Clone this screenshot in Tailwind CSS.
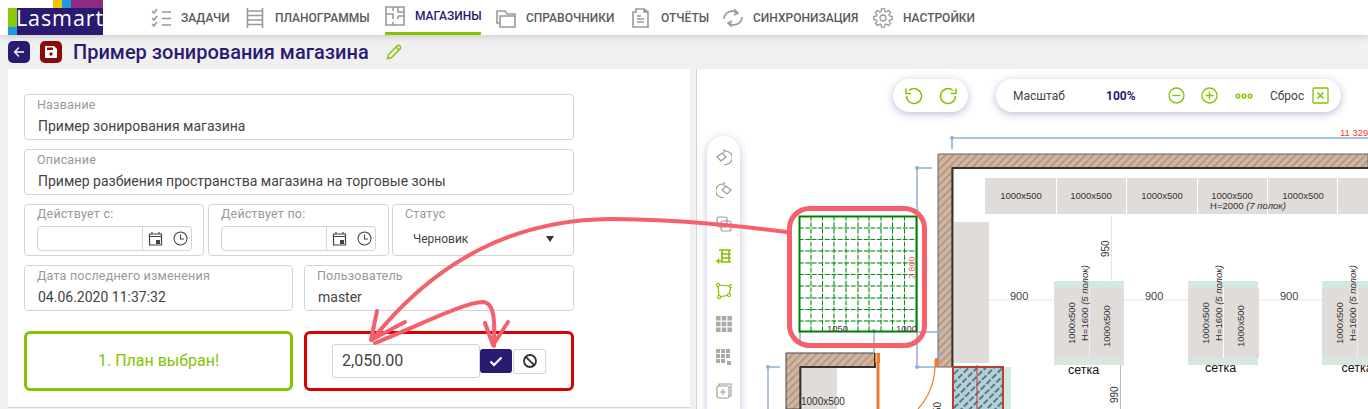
<!DOCTYPE html>
<html lang="en">
  <head>
    <meta charset="UTF-8" />
    <meta name="viewport" content="width=device-width, initial-scale=1.0" />
    <script src="https://cdn.jsdelivr.net/npm/@tailwindcss/browser@4"></script>
    <title>Пример зонирования магазина</title>
  </head>
  <body class="relative w-[1368px] h-[409px] overflow-hidden bg-[#f0f0f0] font-['Roboto',sans-serif]">
    <!-- top nav -->
    <header class="relative z-10 flex h-[35px] bg-white shadow-[0_2px_6px_rgba(0,0,0,0.15)] pl-2">
      <div class="relative w-[95px] h-[35px] shrink-0">
        <div class="absolute left-[45px] top-0 w-[9px] h-2 bg-[#f5c400]"></div>
        <div class="absolute left-[54px] top-0 w-[9px] h-2 bg-[#1e9be0]"></div>
        <div class="absolute left-[63px] top-0 w-[32px] h-2 bg-[#8e2a80]"></div>
        <div class="absolute left-0 top-2 w-[9px] h-[19px] bg-[#8cc800]"></div>
        <div class="absolute left-0 top-[27px] w-[9px] h-2 bg-[#1e9be0]"></div>
        <div class="absolute left-[9px] top-2 w-[86px] h-[27px] bg-[#2a1a72]"></div>
        <div class="absolute left-[8px] top-[4px] text-white text-[21.500px] leading-[27px] font-['Open_Sans',sans-serif] tracking-[0.9px]">Lasmart</div>
      </div>
      <nav class="flex items-stretch ml-[48px] text-[12px] font-medium text-[#5a5a5a]">
        <a class="flex items-center w-[94px]">
          <svg class="w-5 h-5 mr-[10px] shrink-0" viewBox="0 0 20 20" fill="none" stroke="#999" stroke-width="1.600"><path d="M1 3l2 2 3-4M1 10l2 2 3-4M1 16l2 2 3-4"/><path d="M11 4h9M11 10.500h9M11 17h9"/></svg>ЗАДАЧИ
        </a>
        <a class="flex items-center w-[140px]">
          <svg class="w-5 h-5 mr-[10px] shrink-0" viewBox="0 0 20 20" fill="none" stroke="#999" stroke-width="1.600"><path d="M2.500 0v20M17.500 0v20M2.500 3h15M2.500 7.500h15M2.500 12h15M2.500 16.500h15"/></svg>ПЛАНОГРАММЫ
        </a>
        <a class="flex items-center w-[96px] text-[#2a1a72] border-b-[3px] border-[#84c400]">
          <svg class="w-5 h-5 mr-[10px] shrink-0" viewBox="0 0 20 20" fill="none" stroke="#999" stroke-width="1.600"><path d="M1 1h18v18H1zM8 1v4M1 8h7v5M8 19v-3M13 1v5h6M13 10h6M13 10v3"/></svg>МАГАЗИНЫ
        </a>
        <a class="flex items-center w-[135px] ml-[15px]">
          <svg class="w-5 h-5 mr-[10px] shrink-0" viewBox="0 0 20 20" fill="none" stroke="#999" stroke-width="1.600"><path d="M4 15H1V3h8l2 3h8v2M4 8h15v11H4z"/></svg>СПРАВОЧНИКИ
        </a>
        <a class="flex items-center w-[92px]">
          <svg class="w-5 h-5 mr-[10px] shrink-0" viewBox="0 0 20 20" fill="none" stroke="#999" stroke-width="1.600"><path d="M5 1h8v3h4v15H2V4h3zM13 1l4 3M6 11h7M6 14h7M6 8h4"/></svg>ОТЧЁТЫ
        </a>
        <a class="flex items-center w-[150px]">
          <svg class="w-5 h-5 mr-[10px] shrink-0" viewBox="0 0 20 20" fill="none" stroke="#999" stroke-width="1.600"><path d="M1 11a8 8 0 0 1 13-6M19 9a8 8 0 0 1-13 6"/><path d="M11 1l4 4-4 2M9 19l-4-4 4-2"/></svg>СИНХРОНИЗАЦИЯ
        </a>
        <a class="flex items-center">
          <svg class="w-5 h-5 mr-[10px] shrink-0" viewBox="0 0 20 20" fill="none" stroke="#999" stroke-width="1.300">
            <circle cx="10" cy="10" r="3" />
            <path d="M8 3.600L8.500.8h3l.5 2.800A6.800 6.800 0 0 1 13.100 4.060" />
            <path transform="rotate(45 10 10)" d="M8 3.600L8.500.8h3l.5 2.800A6.800 6.800 0 0 1 13.100 4.060" />
            <path transform="rotate(90 10 10)" d="M8 3.600L8.500.8h3l.5 2.800A6.800 6.800 0 0 1 13.100 4.060" />
            <path transform="rotate(135 10 10)" d="M8 3.600L8.500.8h3l.5 2.800A6.800 6.800 0 0 1 13.100 4.060" />
            <path transform="rotate(180 10 10)" d="M8 3.600L8.500.8h3l.5 2.800A6.800 6.800 0 0 1 13.100 4.060" />
            <path transform="rotate(225 10 10)" d="M8 3.600L8.500.8h3l.5 2.800A6.800 6.800 0 0 1 13.100 4.060" />
            <path transform="rotate(270 10 10)" d="M8 3.600L8.500.8h3l.5 2.800A6.800 6.800 0 0 1 13.100 4.060" />
            <path transform="rotate(315 10 10)" d="M8 3.600L8.500.8h3l.5 2.800A6.800 6.800 0 0 1 13.100 4.060" />
          </svg>НАСТРОЙКИ
        </a>
      </nav>
    </header>

    <div class="flex h-[374px]">
      <!-- left column -->
      <div class="w-[690px] shrink-0 pl-2">
        <div class="flex items-center h-[34px]">
          <button class="flex items-center justify-center w-[22px] h-[22px] rounded-[5px] bg-[#2a1a72]">
            <svg class="w-3 h-3" viewBox="0 0 12 12" fill="none" stroke="#fff" stroke-width="1.300"><path d="M11 6H1.500M6 1.500 1.500 6 6 10.500"/></svg>
          </button>
          <button class="flex items-center justify-center w-[22px] h-[22px] ml-[10px] rounded-[5px] bg-[#8b0a0a]">
            <svg class="w-3 h-3" viewBox="0 0 12 12"><path fill="#fff" d="M1 0h8l3 3v8a1 1 0 0 1-1 1H1a1 1 0 0 1-1-1V1a1 1 0 0 1 1-1z"/><path fill="#8b0a0a" d="M2 1.500h6v2.500H2z"/><circle cx="6" cy="8" r="1.700" fill="#8b0a0a"/></svg>
          </button>
          <h1 class="ml-[11px] text-[20px] font-medium text-[#2a1a72] whitespace-nowrap">Пример зонирования магазина</h1>
          <svg class="w-4 h-4 ml-[17px]" viewBox="0 0 16 16" fill="none" stroke="#84c400" stroke-width="1.400"><path d="M1.500 14.500l1-4L11 2a1.500 1.500 0 0 1 3 3l-8.500 8.500z"/><path d="M10 3l3 3"/></svg>
        </div>
        <main class="h-[339px] bg-white border-b border-[#d4d4d4] pl-4 pt-[25px]">
          <div class="flex flex-col gap-[9px] w-[550px] text-[#444]">
            <div class="h-[46px] border border-[#d4d4d4] rounded-[4px] pl-[12px]">
              <div class="text-[12.500px] leading-[14px] mt-[3px] text-[#999] tracking-[0.2px]">Название</div>
              <div class="text-[14px] leading-[16px] mt-[6px] ml-px">Пример зонирования магазина</div>
            </div>
            <div class="h-[46px] border border-[#d4d4d4] rounded-[4px] pl-[12px]">
              <div class="text-[12.500px] leading-[14px] mt-[3px] text-[#999] tracking-[0.2px]">Описание</div>
              <div class="text-[14px] leading-[16px] mt-[6px] ml-px">Пример разбиения пространства магазина на торговые зоны</div>
            </div>
            <div class="flex h-[52px]">
              <div class="w-[180px] border border-[#d4d4d4] rounded-[4px] pl-[12px]">
                <div class="text-[12.500px] leading-[14px] mt-[2px] text-[#999] tracking-[0.2px]">Действует с:</div>
                <div class="flex h-[25px] w-[155px] mt-[5px] border border-[#d4d4d4] rounded-[4px]">
                  <div class="w-[105px] border-r border-[#d4d4d4]"></div>
                  <div class="flex items-center gap-[10px] pl-[5px]">
                    <svg class="w-[15px] h-[15px]" viewBox="0 0 15 15" fill="none" stroke="#444" stroke-width="1.200"><path d="M1.500 3h12v11h-12zM1.500 5.500h12M4 1v2.500M11 1v2.500"/><rect x="8" y="9" width="4" height="4" fill="#444" stroke="none"/></svg>
                    <svg class="w-[15px] h-[15px]" viewBox="0 0 15 15" fill="none" stroke="#444" stroke-width="1.100"><circle cx="7.500" cy="7.500" r="6.500"/><path d="M7.500 3.500v4.500h3.500"/></svg>
                  </div>
                </div>
              </div>
              <div class="w-[181px] ml-1 border border-[#d4d4d4] rounded-[4px] pl-[12px]">
                <div class="text-[12.500px] leading-[14px] mt-[2px] text-[#999] tracking-[0.2px]">Действует по:</div>
                <div class="flex h-[25px] w-[155px] mt-[5px] border border-[#d4d4d4] rounded-[4px]">
                  <div class="w-[105px] border-r border-[#d4d4d4]"></div>
                  <div class="flex items-center gap-[10px] pl-[5px]">
                    <svg class="w-[15px] h-[15px]" viewBox="0 0 15 15" fill="none" stroke="#444" stroke-width="1.200"><path d="M1.500 3h12v11h-12zM1.500 5.500h12M4 1v2.500M11 1v2.500"/><rect x="8" y="9" width="4" height="4" fill="#444" stroke="none"/></svg>
                    <svg class="w-[15px] h-[15px]" viewBox="0 0 15 15" fill="none" stroke="#444" stroke-width="1.100"><circle cx="7.500" cy="7.500" r="6.500"/><path d="M7.500 3.500v4.500h3.500"/></svg>
                  </div>
                </div>
              </div>
              <div class="w-[182px] ml-[3px] border border-[#d4d4d4] rounded-[4px] pl-[12px]">
                <div class="text-[12.500px] leading-[14px] mt-[2px] text-[#999] tracking-[0.2px]">Статус</div>
                <div class="flex items-center justify-between h-[25px] mt-[5px] pl-[8px] pr-[19px] text-[12px]">
                  Черновик
                  <span class="w-0 h-0 border-x-[4px] border-x-transparent border-t-[6px] border-t-[#333]"></span>
                </div>
              </div>
            </div>
            <div class="flex h-[46px] gap-[11px]">
              <div class="w-[269px] border border-[#d4d4d4] rounded-[4px] pl-[12px]">
                <div class="text-[12.500px] leading-[14px] mt-[3px] text-[#999] tracking-[0.2px]">Дата последнего изменения</div>
                <div class="text-[14px] leading-[16px] mt-[6px] ml-px">04.06.2020 11:37:32</div>
              </div>
              <div class="w-[270px] border border-[#d4d4d4] rounded-[4px] pl-[12px]">
                <div class="text-[12.500px] leading-[14px] mt-[3px] text-[#999] tracking-[0.2px]">Пользователь</div>
                <div class="text-[14px] leading-[16px] mt-[6px] ml-px">master</div>
              </div>
            </div>
            <div class="flex h-[60px] gap-[11px] mt-[11px]">
              <div class="flex items-center justify-center w-[269px] border-[3px] border-[#84c400] rounded-[6px] text-[16px] text-[#84c400]">1. План выбран!</div>
              <div class="flex items-center w-[270px] border-[3px] border-[#d80000] rounded-[6px] pl-[25px]">
                <div class="flex items-center w-[148px] h-[34px] border border-[#d4d4d4] rounded-[3px] pl-[9px] text-[16px] text-[#444]">2,050.00</div>
                <button class="flex items-center justify-center w-8 h-6 rounded-[3px] bg-[#2a1a72]">
                  <svg class="w-[14px] h-[14px]" viewBox="0 0 14 14" fill="none" stroke="#fff" stroke-width="2.200"><path d="M1.500 7.500l3.500 3.500 7.500-7.500"/></svg>
                </button>
                <button class="flex items-center justify-center w-[33px] h-[25px] ml-px rounded-[3px] border border-[#d4d4d4]">
                  <svg class="w-[14px] h-[14px]" viewBox="0 0 14 14" fill="none" stroke="#333" stroke-width="1.800"><circle cx="7" cy="7" r="6"/><path d="M2.800 2.800l8.400 8.400"/></svg>
                </button>
              </div>
            </div>
          </div>
        </main>
      </div>

      <!-- plan canvas -->
      <section class="relative mt-[34px] ml-[6px] flex-1 bg-white border-l border-[#d4d4d4]">
        <svg class="absolute left-0 top-0 font-['Liberation_Sans',sans-serif]" width="671" height="340" viewBox="697 69 671 340" fill="none">
          <defs>
            <pattern id="brick" width="5.500" height="5.500" patternUnits="userSpaceOnUse" patternTransform="rotate(45)">
              <rect width="5.500" height="5.500" fill="#d0b5a0" />
              <path d="M2.750 0v5.500" stroke="#a08068" stroke-width="1" />
            </pattern>
            <pattern id="glass" width="6" height="8" patternUnits="userSpaceOnUse" patternTransform="rotate(45)">
              <rect width="6" height="8" fill="#b5d0d6" />
              <path d="M3 0v6" stroke="#3a5a68" stroke-width="1.500" />
            </pattern>
          </defs>
          <!-- walls -->
          <path d="M938 154H1368V168H952V367H938z" fill="url(#brick)" stroke="#666" stroke-width="1" />
          <path d="M1368 168H952.500V367" stroke="#333" stroke-width="2" />
          <path d="M786 409V353H875V367H800V409z" fill="url(#brick)" stroke="#444" stroke-width="1" />
          <path d="M875 353V367H800.500V409" stroke="#333" stroke-width="2" />
          <rect x="802" y="368" width="35" height="41" fill="#e0dcd9" />
          <text x="801" y="405" font-size="10" fill="#333">1000x500</text>
          <!-- dimension lines -->
          <g stroke="#8fb0d8" stroke-width="1.500">
            <path d="M952 138H1368M952 136V149M932 168H917V367H939M917 332H939M800 332V345M874 331V352M768 367V409M768 367H780M939 350V367" />
            <g fill="#8fb0d8" stroke="none">
              <circle cx="952" cy="138" r="2" />
              <circle cx="917" cy="168" r="2" />
              <circle cx="917" cy="367" r="2" />
              <circle cx="939" cy="332" r="2" />
              <circle cx="874" cy="331" r="2" />
              <circle cx="768" cy="367" r="2" />
            </g>
          </g>
          <text x="1340" y="136" font-size="9.500" fill="#f04030">11 329</text>
          <!-- orange door -->
          <path d="M878 353V409" stroke="#f07a30" stroke-width="3" />
          <rect x="875.500" y="353.500" width="4" height="9" stroke="#f07a30" />
          <path d="M935 360C936 382 928 398 918 409" stroke="#f07a30" stroke-width="1.200" />
          <rect x="935" y="358" width="4" height="9" fill="#f07a30" />
          <text transform="rotate(-90 941 413)" x="941" y="413" font-size="10" fill="#333">50</text>
          <!-- top shelves -->
          <rect x="985" y="178" width="383" height="36" fill="#e0dcd9" />
          <path d="M1056.500 178v36M1126.500 178v36M1197.500 178v36M1267.500 178v36M1337.500 178v36" stroke="#fff" />
          <g font-size="9.500" fill="#333" text-anchor="middle">
            <text x="1021" y="199">1000x500</text>
            <text x="1091" y="199">1000x500</text>
            <text x="1162" y="199">1000x500</text>
            <text x="1232" y="199">1000x500</text>
            <text x="1303" y="199">1000x500</text>
            <text x="1248" y="209">H=2000 <tspan font-style="italic">(7 полок)</tspan></text>
          </g>
          <path d="M1111.500 216V281M1124 300H1188M1258 300H1322M989 300H1052" stroke="#e4e4e4" />
          <path d="M1120.500 365V409" stroke="#bbb" />
          <text transform="rotate(-90 1109 257)" x="1109" y="257" font-size="10" fill="#333">950</text>
          <text transform="rotate(-90 1118 403)" x="1118" y="403" font-size="10" fill="#333">990</text>
          <!-- left gondola -->
          <rect x="954" y="222" width="35" height="141" fill="#e0dcd9" />
          <g font-size="11" fill="#444">
            <text x="1010" y="300">900</text>
            <text x="1145" y="300">900</text>
            <text x="1280" y="300">900</text>
          </g>
          <!-- islands -->
          <g>
            <rect x="1054" y="281" width="70" height="84" fill="#d4e8e0" />
            <rect x="1054" y="288" width="70" height="70" fill="#e0dcd9" />
            <path d="M1089.500 288v70" stroke="#eee" />
            <g font-size="9.500" fill="#333">
              <text transform="rotate(-90 1075 344)" x="1075" y="344">1000x500</text>
              <text transform="rotate(-90 1088 341)" x="1088" y="341">H=1600 <tspan font-style="italic">(5 полок)</tspan></text>
              <text transform="rotate(-90 1110 347)" x="1110" y="347">1000x500</text>
            </g>
            <text x="1068" y="374" font-size="12.500" fill="#111">сетка</text>
          </g>
          <g>
            <rect x="1188" y="281" width="70" height="84" fill="#d4e8e0" />
            <rect x="1188" y="288" width="71" height="70" fill="#e0dcd9" />
            <path d="M1223.500 288v70" stroke="#fff" />
            <g font-size="9.500" fill="#333">
              <text transform="rotate(-90 1209 344)" x="1209" y="344">1000x500</text>
              <text transform="rotate(-90 1222 341)" x="1222" y="341">H=1600 <tspan font-style="italic">(5 полок)</tspan></text>
              <text transform="rotate(-90 1244 347)" x="1244" y="347">1000x500</text>
            </g>
            <text x="1205" y="372" font-size="12.500" fill="#111">сетка</text>
          </g>
          <g>
            <rect x="1322" y="281" width="46" height="84" fill="#d4e8e0" />
            <rect x="1322" y="288" width="46" height="70" fill="#e0dcd9" />
            <path d="M1357.500 288v70" stroke="#eee" />
            <g font-size="9.500" fill="#333">
              <text transform="rotate(-90 1343 344)" x="1343" y="344">1000x500</text>
              <text transform="rotate(-90 1356 341)" x="1356" y="341">H=1600 <tspan font-style="italic">(5 полок)</tspan></text>
            </g>
            <text x="1341.500" y="372" font-size="12.500" fill="#111">сетка</text>
          </g>
          <!-- hatched block -->
          <rect x="953" y="367" width="50" height="44" fill="url(#glass)" stroke="#b84030" stroke-width="2" />
          <path d="M977 365v44" stroke="#b84030" />
          <rect x="1004" y="367" width="7" height="42" fill="#d4e8e0" />
          <!-- selected grid -->
          <path d="M811 216v116M822.500 216v116M834 216v116M846 216v116M858 216v116M869 216v116M881 216v116M892.500 216v116M904.500 216v116M799 228h118M799 239.500h118M799 251h118M799 263h118M799 274.500h118M799 286h118M799 298h118M799 309.500h118M799 321h118" stroke="#c4e4c4" />
          <path d="M811 216v116M822.500 216v116M834 216v116M846 216v116M858 216v116M869 216v116M881 216v116M892.500 216v116M904.500 216v116M799 228h118M799 239.500h118M799 251h118M799 263h118M799 274.500h118M799 286h118M799 298h118M799 309.500h118M799 321h118" stroke="#0a8a1a" stroke-dasharray="4.500 2" />
          <rect x="799.500" y="216.500" width="117" height="115" stroke="#008000" stroke-width="2" />
          <text x="827" y="332" font-size="9.500" fill="#444">1050</text>
          <text x="896" y="332" font-size="9.500" fill="#444">1000</text>
          <text transform="rotate(-90 915 279)" x="915" y="279" font-size="9" fill="#f07070">2 800</text>
        </svg>

        <!-- undo/redo -->
        <div class="absolute left-[196px] top-[10px] flex items-center justify-center gap-4 w-[75px] h-[33px] rounded-full bg-white shadow-[0_2px_8px_rgba(70,50,160,0.35)]">
          <svg class="w-[18px] h-[18px]" viewBox="0 0 18 18" fill="none" stroke="#84c400" stroke-width="1.500"><path d="M4 3.500A7.500 7.500 0 1 1 1.500 9M1 1.500v5h5"/></svg>
          <svg class="w-[18px] h-[18px]" viewBox="0 0 18 18" fill="none" stroke="#84c400" stroke-width="1.500"><path d="M14 3.500A7.500 7.500 0 1 0 16.500 9M17 1.500v5h-5"/></svg>
        </div>
        <!-- zoom bar -->
        <div class="absolute left-[299px] top-[10px] flex items-center w-[345px] h-[33px] rounded-full bg-white pl-[17px] text-[12px] text-[#444] shadow-[0_2px_8px_rgba(70,50,160,0.35)]">
          <span class="w-[93px]">Масштаб</span>
          <span class="w-[62px] font-bold text-[#2a1a72]">100%</span>
          <svg class="w-[17px] h-[17px]" viewBox="0 0 17 17" fill="none" stroke="#84c400" stroke-width="1.300"><circle cx="8.500" cy="8.500" r="7.500"/><path d="M4.500 8.500h8"/></svg>
          <svg class="w-[17px] h-[17px] ml-4" viewBox="0 0 17 17" fill="none" stroke="#84c400" stroke-width="1.300"><circle cx="8.500" cy="8.500" r="7.500"/><path d="M4.500 8.500h8M8.500 4.500v8"/></svg>
          <svg class="w-[18px] h-[6px] ml-[17px]" viewBox="0 0 18 6" fill="none" stroke="#84c400" stroke-width="1.500"><circle cx="3" cy="3" r="1.800"/><circle cx="9" cy="3" r="1.800"/><circle cx="15" cy="3" r="1.800"/></svg>
          <span class="w-[42px] ml-[17px]">Сброс</span>
          <svg class="w-[17px] h-[17px]" viewBox="0 0 17 17" fill="none" stroke="#84c400" stroke-width="1.300"><rect x="1" y="1" width="15" height="15" rx="1"/><path d="M5.500 5.500l6 6M11.500 5.500l-6 6" stroke-width="1.600"/></svg>
        </div>
        <!-- tool strip -->
        <div class="absolute left-[10px] top-[67px] flex flex-col items-center gap-[17.400px] w-[33px] h-[290px] pt-[13px] rounded-full bg-white shadow-[0_2px_8px_rgba(70,50,160,0.3)]">
          <svg class="w-4 h-4" viewBox="0 0 16 16" fill="none" stroke="#999" stroke-width="1.200"><path d="M1 8l5-4 4 4-5 4zM9 2a6.500 6.500 0 0 1 1 13.500H8M9 2l-2-1.500M9 2L7.500 4"/></svg>
          <svg class="w-4 h-4" viewBox="0 0 16 16" fill="none" stroke="#999" stroke-width="1.200"><path d="M15 8l-5-4-4 4 5 4zM7 2a6.500 6.500 0 0 0-1 13.500h2M7 2l2-1.500M7 2l1.500 2"/></svg>
          <svg class="w-4 h-4" viewBox="0 0 16 16" fill="none" stroke="#999" stroke-width="1.200"><rect x="1" y="1" width="10" height="10" rx="2"/><rect x="5" y="5" width="10" height="10" rx="2"/></svg>
          <svg class="w-4 h-4" viewBox="0 0 16 16" fill="none" stroke="#84c400" stroke-width="1.600"><path d="M3 1h12M5 5h10M5 9h10M5 13h10M6 1v12M13 1v12M0 12h5M2.500 9.500v5"/></svg>
          <svg class="w-4 h-4" viewBox="0 0 16 16" fill="none" stroke="#84c400" stroke-width="1.200"><path d="M2 2l13 1-2 9-10 2z"/><g fill="#fff"><circle cx="2" cy="2" r="1.500"/><circle cx="15" cy="3" r="1.500"/><circle cx="13" cy="12" r="1.500"/><circle cx="3" cy="14" r="1.500"/></g></svg>
          <svg class="w-4 h-4" viewBox="0 0 16 16" fill="#aaa"><path d="M0 0h4.500v4.500H0zM5.700 0h4.500v4.500H5.700zM11.400 0h4.500v4.500h-4.500zM0 5.700h4.500v4.500H0zM5.700 5.700h4.500v4.500H5.700zM11.400 5.700h4.500v4.500h-4.500zM0 11.400h4.500v4.500H0zM5.700 11.400h4.500v4.500H5.700zM11.400 11.400h4.500v4.500h-4.500z"/></svg>
          <svg class="w-4 h-4" viewBox="0 0 16 16" fill="#aaa"><path d="M0 0h4v4H0zM5 0h4v4H5zM10 0h4v4h-4zM0 5h4v4H0zM5 5h4v4H5zM10 5h4v4h-4zM0 10h4v4H0zM5 10h4v4H5zM11 12h4v4h-4z"/></svg>
          <svg class="w-4 h-4" viewBox="0 0 16 16" fill="none" stroke="#999" stroke-width="1.100"><path d="M3 3V1h12v12h-2"/><rect x="1" y="3" width="12" height="12" rx="1.500"/><path d="M7 6v6M4 9h6"/></svg>
        </div>
      </section>
    </div>

    <!-- red annotation strokes over everything -->
    <svg class="absolute left-0 top-0 z-20 pointer-events-none" width="1368" height="409" viewBox="0 0 1368 409" fill="none" stroke="#f4606c" stroke-linecap="round" stroke-linejoin="round">
      <rect x="789.500" y="208.500" width="135" height="137" rx="20" stroke-width="5" />
      <path d="M787 232C740 226 680 219 610 219 520 220 440 255 372 340" stroke-width="4" />
      <path d="M377 311 371 340 405 322" stroke-width="4" />
      <path d="M375 343C420 325 465 302 483 302 497 303 494 330 494 346" stroke-width="4" />
      <path d="M485 323 493 345 508 322" stroke-width="4" />
    </svg>
  </body>
</html>
